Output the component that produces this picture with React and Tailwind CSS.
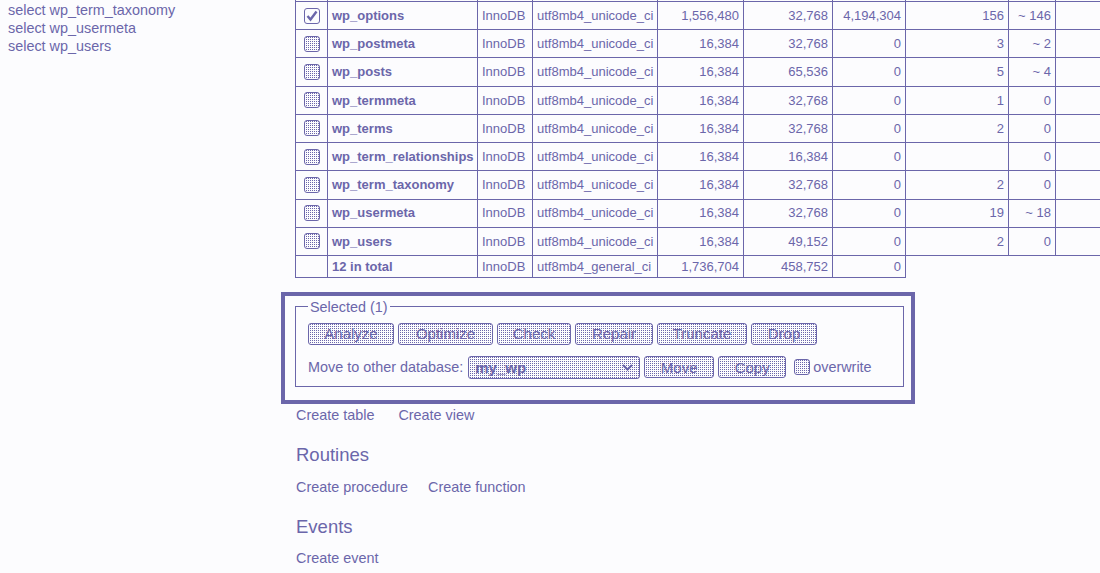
const widths = [32, 150, 55, 125, 86, 89, 73, 103, 47, 120];

const rows = [
  { name: "wp_options", checked: true, data: "1,556,480", idx: "32,768", free: "4,194,304", ai: "156", rows: "~ 146" },
  { name: "wp_postmeta", data: "16,384", idx: "32,768", free: "0", ai: "3", rows: "~ 2" },
  { name: "wp_posts", data: "16,384", idx: "65,536", free: "0", ai: "5", rows: "~ 4" },
  { name: "wp_termmeta", data: "16,384", idx: "32,768", free: "0", ai: "1", rows: "0" },
  { name: "wp_terms", data: "16,384", idx: "32,768", free: "0", ai: "2", rows: "0" },
  { name: "wp_term_relationships", data: "16,384", idx: "16,384", free: "0", ai: "", rows: "0" },
  { name: "wp_term_taxonomy", data: "16,384", idx: "32,768", free: "0", ai: "2", rows: "0" },
  { name: "wp_usermeta", data: "16,384", idx: "32,768", free: "0", ai: "19", rows: "~ 18" },
  { name: "wp_users", data: "16,384", idx: "49,152", free: "0", ai: "2", rows: "0" },
];

const dots = "bg-[conic-gradient(#6b66aa_25%,transparent_0)] bg-[length:2px_2px]";

function Box({ checked }) {
  if (checked) {
    return (
      <div className="w-[16px] h-[16px] rounded-[3px] border border-[#6b66aa] bg-[#fcfcfe] flex items-center justify-center">
        <svg width="12" height="12" viewBox="0 0 12 12">
          <path d="M1.5 6 L4.5 9.5 L10.5 1.5" fill="none" stroke="#6b66aa" strokeWidth="2.4" strokeLinejoin="miter" />
        </svg>
      </div>
    );
  }
  return <div className={"w-[16px] h-[16px] rounded-[3px] border border-[#6b66aa] " + dots}></div>;
}

function Cell({ w, children, right, bold, extra = "" }) {
  return (
    <div
      className={
        "shrink-0 h-full border-r border-b border-[#6b66aa] flex items-center px-[4px] whitespace-nowrap overflow-hidden " +
        (right ? "justify-end " : "") +
        (bold ? "font-bold " : "") +
        extra
      }
      style={{ width: w }}
    >
      {children}
    </div>
  );
}

function Btn({ children, w }) {
  return (
    <button
      className={"shrink-0 h-[22px] border border-[#6b66aa] rounded-[3px] text-[15px] leading-none text-[#6b66aa] flex items-center justify-center " + dots}
      style={{ width: w }}
    >
      {children}
    </button>
  );
}

export default function App() {
  return (
    <div className="w-[1100px] h-[573px] overflow-hidden bg-[#fcfcfe] text-[#6b66aa] font-['Liberation_Sans',Arial,sans-serif] flex">
      <div className="w-[281px] shrink-0 pt-[1px] pl-[8px] text-[14.4px] leading-[18px]">
        <div>select wp_term_taxonomy</div>
        <div>select wp_usermeta</div>
        <div>select wp_users</div>
      </div>
      <div className="flex flex-col w-[819px] shrink-0">
        <div className="ml-[14px] border-l border-[#6b66aa] text-[13px] w-[905px]">
          <div className="flex h-[2px]">
            {widths.map((w, i) => (
              <Cell key={i} w={w} />
            ))}
          </div>
          {rows.map((r) => (
            <div key={r.name} className="flex h-[28.22px]">
              <Cell w={widths[0]} extra="justify-center">
                <Box checked={r.checked} />
              </Cell>
              <Cell w={widths[1]} bold>{r.name}</Cell>
              <Cell w={widths[2]}>InnoDB</Cell>
              <Cell w={widths[3]}>utf8mb4_unicode_ci</Cell>
              <Cell w={widths[4]} right>{r.data}</Cell>
              <Cell w={widths[5]} right>{r.idx}</Cell>
              <Cell w={widths[6]} right>{r.free}</Cell>
              <Cell w={widths[7]} right>{r.ai}</Cell>
              <Cell w={widths[8]} right>{r.rows}</Cell>
              <Cell w={widths[9]} />
            </div>
          ))}
          <div className="flex h-[22px]">
            <Cell w={widths[0]} />
            <Cell w={widths[1]} bold>12 in total</Cell>
            <Cell w={widths[2]}>InnoDB</Cell>
            <Cell w={widths[3]}>utf8mb4_general_ci</Cell>
            <Cell w={widths[4]} right>1,736,704</Cell>
            <Cell w={widths[5]} right>458,752</Cell>
            <Cell w={widths[6]} right>0</Cell>
          </div>
        </div>

        <div className="mt-[14px] w-[634px] h-[112px] border-4 border-[#6b66aa] pt-[2px] pl-[10px]">
          <fieldset className="w-[609px] border border-[#6b66aa] pl-[12px] pt-[7px] pb-[7px] text-[14.4px]">
            <legend className="px-[2px] leading-[18px]">Selected (1)</legend>
            <div className="flex gap-[4px] h-[22px]">
              <Btn w={86}>Analyze</Btn>
              <Btn w={95}>Optimize</Btn>
              <Btn w={74}>Check</Btn>
              <Btn w={78}>Repair</Btn>
              <Btn w={90}>Truncate</Btn>
              <Btn w={66}>Drop</Btn>
            </div>
            <div className="flex items-center h-[23px] mt-[11px]">
              <span className="leading-[18px]">Move to other database:</span>
              <div className={"ml-[5px] w-[172px] h-[23px] border border-[#6b66aa] rounded-[3px] flex items-center justify-between pl-[6px] pr-[6px] " + dots}>
                <span className="font-bold leading-none text-[15px]">my_wp</span>
                <svg width="11" height="7" viewBox="0 0 11 7">
                  <path d="M1 1 L5.5 5.5 L10 1" fill="none" stroke="#6b66aa" strokeWidth="2" />
                </svg>
              </div>
              <div className="ml-[4px] flex gap-[4px]">
                <Btn w={70}>Move</Btn>
                <Btn w={68}>Copy</Btn>
              </div>
              <div className={"ml-[8px] w-[16px] h-[16px] rounded-[3px] border border-[#6b66aa] " + dots}></div>
              <span className="ml-[3px] leading-[18px]">overwrite</span>
            </div>
          </fieldset>
        </div>

        <div className="ml-[15px] text-[14.4px]">
          <div className="mt-[2px] flex gap-[24px] leading-[18px]">
            <span>Create table</span>
            <span>Create view</span>
          </div>
          <div className="mt-[20px] text-[18.5px] leading-[22px]">Routines</div>
          <div className="mt-[12px] flex gap-[20px] leading-[18px]">
            <span>Create procedure</span>
            <span>Create function</span>
          </div>
          <div className="mt-[20px] text-[18.5px] leading-[22px]">Events</div>
          <div className="mt-[11px] leading-[18px]">Create event</div>
        </div>
      </div>
    </div>
  );
}
